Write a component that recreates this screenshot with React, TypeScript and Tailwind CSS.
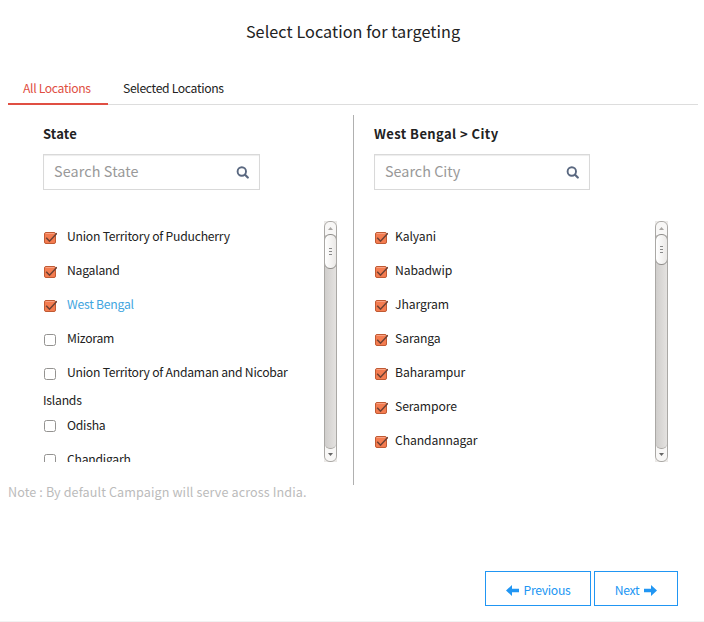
const sans = "font-['Noto_Sans_CJK_SC','Noto_Sans',sans-serif]";

function Checkbox({ checked, raised }: { checked: boolean; raised?: boolean }) {
  return (
    <svg
      className={`mr-[10px] inline-block h-[14px] w-[14px] shrink-0 ${raised ? "align-[-3px]" : "align-[-4px]"}`}
      viewBox="0 0 14 14"
    >
      {checked ? (
        <>
          <rect x="1.5" y="1.5" width="11" height="11" rx="1.5" fill="#f47c50" stroke="#c05a33" />
          <path d="M2.5 2.5h9" stroke="#f9a283" />
          <path d="M3.2 6.8l3.3 3.4L14 2.2" fill="none" stroke="#6e4133" strokeWidth="1.6" />
        </>
      ) : (
        <rect x="1.5" y="1.5" width="11" height="11" rx="2" fill="#fff" stroke="#949391" />
      )}
    </svg>
  );
}

function SearchBox({ label, tracking }: { label: string; tracking: string }) {
  return (
    <div className="flex h-9 items-center justify-between border border-[#d9d9d9] pl-[10px] pr-[10px] shadow-[inset_0_1px_1px_rgba(0,0,0,0.075)]">
      <span className={`pb-[2px] text-[14.4px] text-[#999] ${tracking}`}>{label}</span>
      <svg className="mt-px h-[13px] w-[13px]" viewBox="0 0 13 13" fill="none" stroke="#5a6880">
        <circle cx="5.8" cy="5.5" r="4.2" strokeWidth="1.9" />
        <path d="M9 8.7l2.8 2.8" strokeWidth="2.2" strokeLinecap="round" />
      </svg>
    </div>
  );
}

function Scrollbar({ thumb }: { thumb: string }) {
  return (
    <div className="flex h-[241px] w-[13px] flex-col bg-[#ebe9e7]">
      <div className="flex h-full flex-col overflow-hidden rounded-[6px] border border-[#aaa8a5] bg-linear-to-r from-[#d0cecc] to-[#e4e2e0]">
        <div className="flex h-[13px] shrink-0 items-center justify-center bg-[#f8f7f6]">
          <svg className="h-[3px] w-[5px]" viewBox="0 0 5 3"><path d="M0 3L2.5 0L5 3z" fill="#aaa7a4" /></svg>
        </div>
        <div className={`-mx-px -mt-px flex shrink-0 flex-col items-center justify-center gap-[2px] rounded-[6px] border border-[#8f8d8a] bg-linear-to-r from-white to-[#ebe9e7] ${thumb}`}>
          <i className="h-px w-[3px] bg-[#888]" />
          <i className="h-px w-[3px] bg-[#888]" />
          <i className="h-px w-[3px] bg-[#888]" />
        </div>
        <div className="grow" />
        <div className="h-[18px] shrink-0 bg-[#f8f7f6]">
          <div className="mb-[4px] h-[6px] rounded-b-[5px] border-b border-[#aaa8a5] bg-linear-to-r from-[#d0cecc] to-[#e4e2e0]" />
          <svg className="mx-auto h-[3px] w-[5px]" viewBox="0 0 5 3"><path d="M0 0L2.5 3L5 0z" fill="#666" /></svg>
        </div>
      </div>
    </div>
  );
}

type Place = { name: string; checked: boolean; active?: boolean; tall?: boolean; raised?: boolean };

const states: Place[] = [
  { name: "Union Territory of Puducherry", checked: true },
  { name: "Nagaland", checked: true },
  { name: "West Bengal", checked: true, active: true },
  { name: "Mizoram", checked: false },
  { name: "Union Territory of Andaman and Nicobar Islands", checked: false, tall: true },
  { name: "Odisha", checked: false, raised: true },
  { name: "Chandigarh", checked: false, raised: true },
];

const cities: Place[] = ["Kalyani", "Nabadwip", "Jhargram", "Saranga", "Baharampur", "Serampore", "Chandannagar"].map(
  (name) => ({ name, checked: true }),
);

function PlaceList({ places, narrow }: { places: Place[]; narrow?: boolean }) {
  return (
    <ul className={`h-[241px] w-[270px] overflow-hidden text-[12.2px] leading-[28px] text-[#222] ${narrow ? "tracking-[-0.12px]" : "tracking-[-0.24px]"}`}>
      {places.map((p) => (
        <li
          key={p.name}
          className={`pt-px ${p.tall ? "h-[53px]" : "h-[34px]"} ${p.active ? "text-[#42a5e0]" : ""}`}
        >
          <Checkbox checked={p.checked} raised={p.raised} />
          <span className={narrow ? "-ml-[3px]" : ""}>{p.name}</span>
        </li>
      ))}
    </ul>
  );
}

export default function App() {
  return (
    <div className={`flex h-[622px] w-[704px] flex-col border-b border-[#f2f2f2] bg-white text-[#222] ${sans}`}>
      <h1 className="h-[72px] pl-[2px] pt-[17px] text-center text-[16.2px] leading-[28px] tracking-[0.07px]">Select Location for targeting</h1>

      <nav className="ml-2 mr-[6px] flex h-[33px] border-b border-[#ddd] text-[12.2px] leading-[32px] tracking-[-0.34px]">
        <span className="h-[33px] w-[100px] border-b-2 border-[#e04f43] pl-[15px] text-[#e04f43]">All Locations</span>
        <span className="ml-[15px]">Selected Locations</span>
      </nav>

      <main className="mt-[10px] flex h-[370px]">
        <section className="w-[354px] border-r border-[#b0b0b0] pl-[43px]">
          <h2 className="h-[39px] text-[13px] font-bold leading-[38px] tracking-[0.15px]">State</h2>
          <div className="w-[217px]"><SearchBox label="Search State" tracking="tracking-[0.1px]" /></div>
          <div className="mt-[31px] flex justify-between pr-[16px]">
            <PlaceList places={states} />
            <Scrollbar thumb="h-[35px]" />
          </div>
        </section>
        <section className="w-[314px] pl-[20px]">
          <h2 className="h-[39px] text-[13px] font-bold leading-[38px] tracking-[0.42px]">West Bengal &gt; City</h2>
          <div className="w-[216px]"><SearchBox label="Search City" tracking="tracking-normal" /></div>
          <div className="mt-[31px] flex justify-between">
            <PlaceList places={cities} narrow />
            <Scrollbar thumb="h-[31px]" />
          </div>
        </section>
      </main>

      <p className="-mt-px pl-2 text-[12.6px] leading-[15px] tracking-[0.1px] text-[#bbb]">Note : By default Campaign will serve across India.</p>

      <footer className="mt-[72px] flex justify-end gap-[3px] pr-[26px] text-[12.2px] tracking-[-0.3px] text-[#2196f3]">
        <button className="flex h-[35px] w-[106px] items-center justify-center gap-[5px] border border-[#2196f3] pt-[4px]">
          <svg className="h-[11px] w-[13px]" viewBox="0 0 13 11"><path d="M0 5.5L6 0v3.8h7v3.4H6V11z" fill="#2196f3" /></svg>
          Previous
        </button>
        <button className="flex h-[35px] w-[84px] items-center justify-center gap-[5px] border border-[#2196f3] pt-[4px]">
          Next
          <svg className="h-[11px] w-[13px]" viewBox="0 0 13 11"><path d="M13 5.5L7 0v3.8H0v3.4h7V11z" fill="#2196f3" /></svg>
        </button>
      </footer>
    </div>
  );
}
